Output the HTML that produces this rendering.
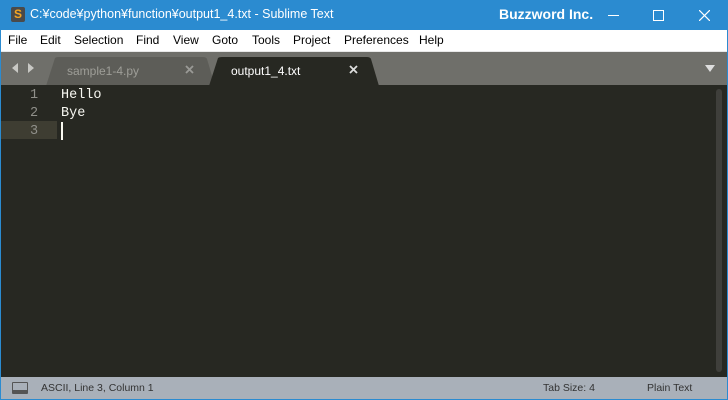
<!DOCTYPE html>
<html><head><style>
*{margin:0;padding:0;box-sizing:border-box}
body{width:728px;height:400px;overflow:hidden;background:#2b8bd0;font-family:"Liberation Sans",sans-serif;position:relative}
.t{position:absolute;left:0;top:0;width:728px;height:30px;background:#2b8bd0;color:#fff}
.menu{position:absolute;left:1px;top:30px;width:726px;height:21px;background:#fff;font-size:12px;color:#000}
.menu span{position:absolute;top:3px}
.tabs{position:absolute;left:1px;top:51px;width:726px;height:34px;background:#6f6f6a;border-top:1px solid #e8e8e8}
.ed{position:absolute;left:1px;top:85px;width:726px;height:292px;background:#272822;font-family:"Liberation Mono",monospace;font-size:13.5px}
.st{position:absolute;left:1px;top:377px;width:726px;height:22px;background:#a9b0b9;font-size:10.5px;color:#333}
</style></head><body>
<div class="t">
<div style="position:absolute;left:11px;top:7px;width:14px;height:15px;background:#4a4a4a;border-radius:2px;color:#f5a623;font-weight:bold;font-size:12px;text-align:center;line-height:15px">S</div>
<div style="position:absolute;left:30px;top:7px;font-size:12.5px">C:¥code¥python¥function¥output1_4.txt - Sublime Text</div>
<div style="position:absolute;left:499px;top:6px;font-size:14px;font-weight:bold">Buzzword Inc.</div>
<div style="position:absolute;left:608px;top:15px;width:11px;height:1px;background:#fff"></div>
<div style="position:absolute;left:653px;top:10px;width:11px;height:11px;border:1px solid #fff"></div>
<svg style="position:absolute;left:699px;top:10px" width="11" height="11"><path d="M0 0L11 11M11 0L0 11" stroke="#fff" stroke-width="1.2"/></svg>
</div>
<div class="menu">
<span style="left:7px">File</span><span style="left:39px">Edit</span><span style="left:73px">Selection</span><span style="left:135px">Find</span><span style="left:172px">View</span><span style="left:211px">Goto</span><span style="left:251px">Tools</span><span style="left:292px">Project</span><span style="left:343px">Preferences</span><span style="left:418px">Help</span>
</div>
<div class="tabs">
<svg style="position:absolute;left:0;top:0" width="726" height="34">
<path d="M11 16L17 11L17 21Z M27 11L33 16L27 21Z" fill="#c8c8c4"/>
<path d="M45 34L54 6Q55 5 58 5L202 5Q205 5 206 7L214 34Z" fill="#5d5d58"/>
<path d="M208 34L217 6Q218 5 221 5L366 5Q369 5 370 7L378 34Z" fill="#272822"/>
<path d="M185 14L192 21M192 14L185 21" stroke="#9a9a96" stroke-width="1.8"/>
<path d="M349 14L356 21M356 14L349 21" stroke="#ddd" stroke-width="1.8"/>
<path d="M704 13L714 13L709 20Z" fill="#ddd"/>
</svg>
<div style="position:absolute;left:66px;top:12px;font-size:12px;color:#9e9e98">sample1-4.py</div>
<div style="position:absolute;left:230px;top:12px;font-size:12px;color:#fff">output1_4.txt</div>
</div>
<div class="ed">
<div style="position:absolute;left:0;top:36px;width:56px;height:18px;background:#3e3d32"></div>
<div style="position:absolute;left:29px;top:2px;color:#90908a;line-height:18px">1<br>2<br>3</div>
<div style="position:absolute;left:60px;top:2px;color:#f8f8f2;line-height:18px">Hello<br>Bye</div>
<div style="position:absolute;left:60px;top:37px;width:2px;height:18px;background:#f8f8f0"></div>
<div style="position:absolute;left:715px;top:4px;width:6px;height:283px;background:#3f3f3b;border-radius:3px"></div>
</div>
<div class="st">
<div style="position:absolute;left:11px;top:5px;width:16px;height:12px;border:1px solid #555;border-bottom:4px solid #555;border-radius:1px"></div>
<div style="position:absolute;left:40px;top:5px">ASCII, Line 3, Column 1</div>
<div style="position:absolute;left:542px;top:5px">Tab Size: 4</div>
<div style="position:absolute;left:646px;top:5px">Plain Text</div>
</div>
</body></html>
